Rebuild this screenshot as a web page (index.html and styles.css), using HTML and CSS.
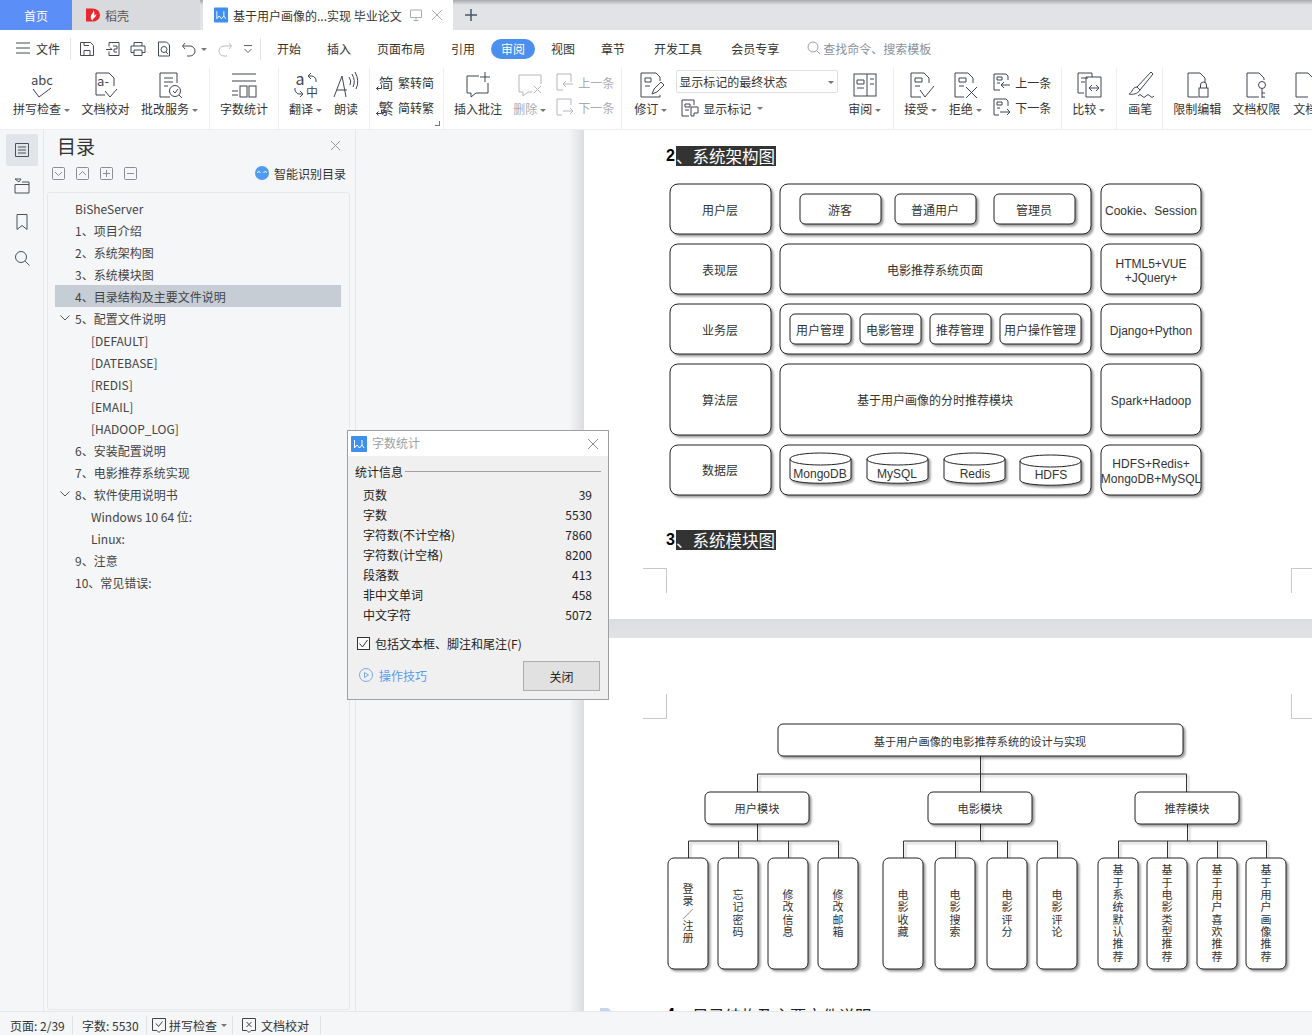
FILE: index.html
```html
<!DOCTYPE html>
<html lang="zh-CN">
<head>
    <meta charset="UTF-8">
    <title>基于用户画像的电影推荐系统的设计与实现 毕业论文</title>
    <link rel="stylesheet" href="styles.css">
</head>
<body>

<!-- Tabs -->
<div class="tabbar">
    <div class="tab tab-home">首页</div>
    <div class="tab tab-app">
        <svg class="tab-logo" viewBox="0 0 16 16"><path class="logo-red" d="M0 1h7a8 7 0 0 1 0 14H0z"/><path class="logo-white" d="M8 2c1 3-3 5-3 8 0 2 1 3 2 4 0-3 4-3 4-7-1 1-2 2-2 2 0-2 0-5-1-7z"/></svg>
        稻壳
    </div>
    <div class="tab tab-doc">
        <svg class="tab-logo" viewBox="0 0 16 16"><rect class="logo-blue" width="15" height="16" rx="1"/><path class="logo-w" d="M3 4v8l2.500-3 2.500 3 2.500-3V4M10.500 9l2 3"/></svg>
        <span class="tab-title">基于用户画像的...实现 毕业论文</span>
        <svg class="tab-ic" viewBox="0 0 12 12"><path d="M.5 1h11v7.500H.5zM6 8.500V11M3.500 11.500h5"/></svg>
        <svg class="tab-ic tab-close" viewBox="0 0 12 12"><path d="M1 1l10 10M11 1L1 11"/></svg>
    </div>
    <svg class="tab-plus" viewBox="0 0 12 12"><path d="M6 0v12M0 6h12"/></svg>
</div>

<!-- Menu row -->
<div class="menubar">
    <div class="file-menu">
        <svg class="qa" viewBox="0 0 16 16"><path d="M1 3h14M1 8h14M1 13h14"/></svg>
        文件
    </div>
    <div class="quick">
        <svg class="qa" viewBox="0 0 16 16"><path d="M1.500 1.500h10l3 3v10h-13zM5 14.500V9.500h6v5M5 1.500v3h5"/></svg>
        <svg class="qa" viewBox="0 0 16 16"><path d="M4 1.500h10v13H4v-4M4 5.500V1.500M1 8.500h6M7 8.500l-2-2M8 5h4v3H9v3h3"/></svg>
        <svg class="qa" viewBox="0 0 16 16"><path d="M4 5V1.500h8V5M4 11.500H1V5h14v6.500h-3M4 9h8v5.500H4z"/></svg>
        <svg class="qa" viewBox="0 0 16 16"><path d="M2.500 1h8l3 3v11h-11z"/><circle cx="8" cy="8.500" r="3"/><path d="M10 11l2 2"/></svg>
        <svg class="qa" viewBox="0 0 16 16"><path d="M4 2L1.500 5 4 8M2 5h7a4.500 4.500 0 0 1 0 10H6"/></svg>
        <i class="caret"></i>
        <svg class="qa qa-off" viewBox="0 0 16 16"><path d="M12 2l2.500 3L12 8M14 5H7a4.500 4.500 0 0 0 0 10h3"/></svg>
        <svg class="qa qa-more" viewBox="0 0 10 10"><path d="M1 1.500h8M1.500 5L5 8.500 8.500 5"/></svg>
    </div>
    <nav class="menu-tabs">
        <span>开始</span>
        <span>插入</span>
        <span>页面布局</span>
        <span>引用</span>
        <span class="on">审阅</span>
        <span>视图</span>
        <span>章节</span>
        <span class="wide">开发工具</span>
        <span class="wide">会员专享</span>
    </nav>
    <div class="search">
        <svg viewBox="0 0 14 14"><circle cx="6" cy="6" r="5"/><path d="M9.500 9.500L13 13"/></svg>
        查找命令、搜索模板
    </div>
</div>

<!-- Ribbon -->
<div class="ribbon">
    <div class="rib-group g-proof">
        <div class="rib-item">
            <svg class="ico" viewBox="0 0 28 28"><text class="ico-text" x="14" y="14">abc</text><path d="M5 18l6 8L23 17"/></svg>
            <span>拼写检查<i class="caret"></i></span>
        </div>
        <div class="rib-item">
            <svg class="ico" viewBox="0 0 28 28"><path d="M22 15V7l-5-5H4v22h9"/><text class="ico-text" x="11" y="15">a-</text><path d="M13 20l5 6 7-8"/></svg>
            <span>文档校对</span>
        </div>
        <div class="rib-item">
            <svg class="ico" viewBox="0 0 28 28"><path d="M21 12V2H4v24h10M8 7h9M8 11h9M8 15h4"/><circle cx="19" cy="20" r="5.500"/><path d="M17 20l2 2 3-4M23 24l3 3"/></svg>
            <span>批改服务<i class="caret"></i></span>
        </div>
    </div>
    <div class="rib-group g-count">
        <div class="rib-item">
            <svg class="ico" viewBox="0 0 28 28"><path d="M2 3h24M2 10h24M2 20h6M2 24h6"/><rect x="10" y="15" width="7" height="11"/><rect x="19" y="15" width="7" height="11"/></svg>
            <span>字数统计</span>
        </div>
    </div>
    <div class="rib-group g-translate">
        <div class="rib-item">
            <svg class="ico" viewBox="0 0 28 28"><text class="ico-text big" x="8" y="14">a</text><text class="ico-text mid" x="20" y="26">中</text><path d="M16 5h4a5 5 0 0 1 4 6M16 5l3-3M16 5l3 3M11 23H7a5 5 0 0 1-4-6M11 23l-3-3M11 23l-3 3"/></svg>
            <span>翻译<i class="caret"></i></span>
        </div>
        <div class="rib-item narrow">
            <svg class="ico" viewBox="0 0 28 28"><path d="M2 26L10 5l4 21M5 19h10M17 6q3 4 1 8M20 3q4 7 1 13M23 1q5 9 1 17"/></svg>
            <span>朗读</span>
        </div>
    </div>
    <div class="rib-group g-convert">
        <div class="rib-stack">
            <div class="rib-row"><span class="glyph">简<svg class="glyph-arrow" viewBox="0 0 6 8"><path d="M5.500 .5v4h-5M.5 4.500l2-2M.5 4.500l2 2"/></svg></span>繁转简</div>
            <div class="rib-row"><span class="glyph">繁<svg class="glyph-arrow" viewBox="0 0 6 8"><path d="M5.500 .5v4h-5M.5 4.500l2-2M.5 4.500l2 2"/></svg></span>简转繁</div>
        </div>
    </div>
    <div class="rib-group g-comment">
        <div class="rib-item">
            <svg class="ico" viewBox="0 0 28 28"><path d="M15 5H3v17h4v4l5-4h12V12M21 1v10M16 6h10"/></svg>
            <span>插入批注</span>
        </div>
        <div class="rib-item off">
            <svg class="ico" viewBox="0 0 28 28"><path d="M25 13V4H3v17h4v4l5-4h4M18 15l7 7M25 15l-7 7"/></svg>
            <span>删除<i class="caret"></i></span>
        </div>
        <div class="rib-stack off">
            <div class="rib-row"><svg class="ico-s" viewBox="0 0 18 18"><path d="M15 9V1H1v16h6M17 11H7M7 11l3-3M7 11l3 3"/></svg>上一条</div>
            <div class="rib-row"><svg class="ico-s" viewBox="0 0 18 18"><path d="M15 7V1H1v16h5M7 13h10M17 13l-3-3M17 13l-3 3"/></svg>下一条</div>
        </div>
    </div>
    <div class="rib-group g-revise">
        <div class="rib-item">
            <svg class="ico" viewBox="0 0 28 28"><path d="M23 10V6l-4-4H4v24h19v-2M8 7h6v4H8zM8 15h5M15 23l2-5 7-7 3 3-7 7z"/></svg>
            <span>修订<i class="caret"></i></span>
        </div>
        <div class="rib-stack wide-stack">
            <div class="select">显示标记的最终状态<i class="caret"></i></div>
            <div class="rib-row mark-row"><svg class="ico-s" viewBox="0 0 18 18"><path d="M13 6V1H1v16h7M4 5h5v3H4zM4 11h4M10 8h7v6h-4v3h-3z"/></svg>显示标记<i class="caret"></i></div>
        </div>
        <div class="rib-item">
            <svg class="ico" viewBox="0 0 28 28"><rect x="3" y="3" width="22" height="22"/><path d="M16 3v22M6 9h7v4H6zM6 17h7M19 8h4M19 13h4"/></svg>
            <span>审阅<i class="caret"></i></span>
        </div>
    </div>
    <div class="rib-group g-accept">
        <div class="rib-item">
            <svg class="ico" viewBox="0 0 28 28"><path d="M22 12V7l-5-5H4v24h10M8 7h7v4H8zM8 15h5M13 19l5 7 9-11"/></svg>
            <span>接受<i class="caret"></i></span>
        </div>
        <div class="rib-item">
            <svg class="ico" viewBox="0 0 28 28"><path d="M22 12V7l-5-5H4v24h9M8 7h7v4H8zM8 15h5M15 16l11 11M26 16L15 27"/></svg>
            <span>拒绝<i class="caret"></i></span>
        </div>
        <div class="rib-stack">
            <div class="rib-row"><svg class="ico-s" viewBox="0 0 18 18"><path d="M15 7V3l-2-2H1v16h6M4 4h5v3H4zM4 10h3M17 12H8M8 12l3-3M8 12l3 3"/></svg>上一条</div>
            <div class="rib-row"><svg class="ico-s" viewBox="0 0 18 18"><path d="M15 8V3l-2-2H1v16h5M4 4h5v3H4zM4 10h3M7 14h10M17 14l-3-3M17 14l-3 3"/></svg>下一条</div>
        </div>
    </div>
    <div class="rib-group g-compare">
        <div class="rib-item">
            <svg class="ico" viewBox="0 0 28 28"><path d="M17 6V2H3v20h6M6 7h7M6 11h4M11 6h15v20H11zM14 17h10M14 17l3-3M14 17l3 3M24 17l-3-3M24 17l-3 3"/></svg>
            <span>比较<i class="caret"></i></span>
        </div>
    </div>
    <div class="rib-group g-pen">
        <div class="rib-item narrow">
            <svg class="ico" viewBox="0 0 28 28"><path d="M25 1L11 16l3 3L27 3zM11 16c-3 0-4 2-5 4s-3 3-3 3c3 1 9 0 11-4M12 25q2-3 4 0t4 0 4 0 4 0"/></svg>
            <span>画笔</span>
        </div>
    </div>
    <div class="rib-group g-protect">
        <div class="rib-item">
            <svg class="ico" viewBox="0 0 28 28"><path d="M22 12V7l-5-5H5v24h10"/><rect x="16" y="17" width="9" height="9"/><path d="M17.500 17v-3a3 3 0 0 1 6 0v3"/></svg>
            <span>限制编辑</span>
        </div>
        <div class="rib-item">
            <svg class="ico" viewBox="0 0 28 28"><path d="M22 9V7l-5-5H5v24h12"/><circle cx="20" cy="14" r="3.500"/><path d="M20 17.500V27M20 22h3M20 26h3"/></svg>
            <span>文档权限</span>
        </div>
        <div class="rib-item">
            <svg class="ico" viewBox="0 0 28 28"><path d="M22 9V7l-5-5H5v24h12"/></svg>
            <span>文档</span>
        </div>
    </div>
</div>

<div class="main">
    <!-- Left rail -->
    <div class="rail">
        <div class="rail-btn active"><svg viewBox="0 0 16 16"><path d="M1.500 1.500h13v13h-13zM4 5h8M4 8h8M4 11h8"/></svg></div>
        <div class="rail-btn"><svg viewBox="0 0 16 16"><path d="M1 1l4 3 2-3zM1 6.500h14v8.500H1zM8 4h7v2.500"/></svg></div>
        <div class="rail-btn"><svg viewBox="0 0 16 16"><path d="M3 .5h10v15l-5-4-5 4z"/></svg></div>
        <div class="rail-btn"><svg viewBox="0 0 16 16"><circle cx="7" cy="7" r="5.500"/><path d="M11 11l4.500 4.500"/></svg></div>
    </div>

    <!-- Table of contents -->
    <div class="toc">
        <div class="toc-head">
            <span class="toc-title">目录</span>
            <svg class="toc-close" viewBox="0 0 10 10"><path d="M0 0l10 10M10 0L0 10"/></svg>
        </div>
        <div class="toc-tools">
            <svg class="tool" viewBox="0 0 13 13"><rect x=".5" y=".5" width="12" height="12" rx="1"/><path d="M3 5l3.500 3.500L10 5"/></svg>
            <svg class="tool" viewBox="0 0 13 13"><rect x=".5" y=".5" width="12" height="12" rx="1"/><path d="M3 8l3.500-3.500L10 8"/></svg>
            <svg class="tool" viewBox="0 0 13 13"><rect x=".5" y=".5" width="12" height="12" rx="1"/><path d="M3 6.500h7M6.500 3v7"/></svg>
            <svg class="tool" viewBox="0 0 13 13"><rect x=".5" y=".5" width="12" height="12" rx="1"/><path d="M3 6.500h7"/></svg>
            <div class="smart">
                <svg viewBox="0 0 14 14"><circle class="smart-bg" cx="7" cy="7" r="7"/><path class="smart-eye" d="M2 6.500q2-2 3.500 0M8.500 6.500q2-2 3.500 0"/></svg>
                智能识别目录
            </div>
        </div>
        <div class="toc-list">
            <div class="toc-item"><i class="slot"></i>BiSheServer</div>
            <div class="toc-item"><i class="slot"></i>1、项目介绍</div>
            <div class="toc-item"><i class="slot"></i>2、系统架构图</div>
            <div class="toc-item"><i class="slot"></i>3、系统模块图</div>
            <div class="toc-item current"><i class="slot"></i>4、目录结构及主要文件说明</div>
            <div class="toc-item"><i class="slot"><svg viewBox="0 0 10 6"><path d="M.5.5L5 5 9.500.5"/></svg></i>5、配置文件说明</div>
            <div class="toc-item sub"><i class="slot"></i>[DEFAULT]</div>
            <div class="toc-item sub"><i class="slot"></i>[DATEBASE]</div>
            <div class="toc-item sub"><i class="slot"></i>[REDIS]</div>
            <div class="toc-item sub"><i class="slot"></i>[EMAIL]</div>
            <div class="toc-item sub"><i class="slot"></i>[HADOOP_LOG]</div>
            <div class="toc-item"><i class="slot"></i>6、安装配置说明</div>
            <div class="toc-item"><i class="slot"></i>7、电影推荐系统实现</div>
            <div class="toc-item"><i class="slot"><svg viewBox="0 0 10 6"><path d="M.5.5L5 5 9.500.5"/></svg></i>8、软件使用说明书</div>
            <div class="toc-item sub"><i class="slot"></i>Windows 10 64 位:</div>
            <div class="toc-item sub"><i class="slot"></i>Linux:</div>
            <div class="toc-item"><i class="slot"></i>9、注意</div>
            <div class="toc-item"><i class="slot"></i>10、常见错误:</div>
        </div>
    </div>

    <div class="gutter"></div>

    <!-- Document -->
    <div class="doc">
        <div class="page page-one">
            <h2 class="doc-h"><b>2</b><span class="sel">、系统架构图</span></h2>
            <svg class="dg dg-arch" viewBox="660 178 552 325">
                <rect class="b" x="670" y="184" width="101" height="50" rx="8"/><text x="720" y="210">用户层</text>
                <rect class="b" x="780" y="184" width="311" height="50" rx="8"/>
                <rect class="b" x="800" y="194" width="81" height="30" rx="5"/><text x="840" y="210">游客</text>
                <rect class="b" x="895" y="194" width="81" height="30" rx="5"/><text x="935" y="210">普通用户</text>
                <rect class="b" x="994" y="194" width="81" height="30" rx="5"/><text x="1034" y="210">管理员</text>
                <rect class="b" x="1101" y="184" width="100" height="50" rx="8"/><text x="1151" y="210">Cookie、Session</text>

                <rect class="b" x="670" y="244" width="101" height="50" rx="8"/><text x="720" y="270">表现层</text>
                <rect class="b" x="780" y="244" width="311" height="50" rx="8"/><text x="935" y="270">电影推荐系统页面</text>
                <rect class="b" x="1101" y="244" width="100" height="50" rx="8"/><text x="1151" y="263">HTML5+VUE</text><text x="1151" y="277">+JQuery+</text>

                <rect class="b" x="670" y="304" width="101" height="50" rx="8"/><text x="720" y="330">业务层</text>
                <rect class="b" x="780" y="304" width="311" height="50" rx="8"/>
                <rect class="b" x="790" y="314" width="61" height="30" rx="5"/><text x="820" y="330">用户管理</text>
                <rect class="b" x="860" y="314" width="61" height="30" rx="5"/><text x="890" y="330">电影管理</text>
                <rect class="b" x="930" y="314" width="61" height="30" rx="5"/><text x="960" y="330">推荐管理</text>
                <rect class="b" x="1000" y="314" width="81" height="30" rx="5"/><text x="1040" y="330">用户操作管理</text>
                <rect class="b" x="1101" y="304" width="100" height="50" rx="8"/><text x="1151" y="330">Django+Python</text>

                <rect class="b" x="670" y="364" width="101" height="71" rx="8"/><text x="720" y="400">算法层</text>
                <rect class="b" x="780" y="364" width="311" height="71" rx="8"/><text x="935" y="400">基于用户画像的分时推荐模块</text>
                <rect class="b" x="1101" y="364" width="100" height="71" rx="8"/><text x="1151" y="400">Spark+Hadoop</text>

                <rect class="b" x="670" y="445" width="101" height="50" rx="8"/><text x="720" y="470">数据层</text>
                <rect class="b" x="780" y="445" width="311" height="50" rx="8"/>
                <g class="cyl"><path d="M790 459v19c0 7 61 7 61 0v-19c0-8-61-8-61 0c0 8 61 8 61 0"/></g><text x="820" y="473">MongoDB</text>
                <g class="cyl"><path d="M867 459v19c0 7 61 7 61 0v-19c0-8-61-8-61 0c0 8 61 8 61 0"/></g><text x="897" y="473">MySQL</text>
                <g class="cyl"><path d="M944 459v19c0 7 61 7 61 0v-19c0-8-61-8-61 0c0 8 61 8 61 0"/></g><text x="975" y="473">Redis</text>
                <g class="cyl"><path d="M1020 461v19c0 7 61 7 61 0v-19c0-8-61-8-61 0c0 8 61 8 61 0"/></g><text x="1051" y="474">HDFS</text>
                <rect class="b" x="1101" y="445" width="100" height="50" rx="8"/><text x="1151" y="463">HDFS+Redis+</text><text x="1151" y="478">MongoDB+MySQL</text>
            </svg>
            <h2 class="doc-h second"><b>3</b><span class="sel">、系统模块图</span></h2>
            <i class="mark mark-tl"></i>
            <i class="mark mark-tr"></i>
        </div>

        <div class="page-gap"></div>

        <div class="page page-two">
            <i class="mark mark-bl"></i>
            <i class="mark mark-br"></i>
            <svg class="dg dg-tree" viewBox="660 720 640 260">
                <path class="link" d="M980.500 756v36M757.500 792v-18h429v18M757.500 824v17M688.500 858v-17h150v17M738.500 841v17M788.500 841v17M980.500 824v17M903.500 858v-17h154v17M955.500 841v17M1007.500 841v17M1187.500 824v17M1118.500 858v-17h148v17M1167.500 841v17M1217.500 841v17"/>

                <rect class="b" x="778" y="724" width="405" height="32" rx="5"/><text class="sm" x="980" y="741">基于用户画像的电影推荐系统的设计与实现</text>
                <rect class="b" x="705" y="792" width="104" height="32" rx="5"/><text class="sm" x="757" y="808">用户模块</text>
                <rect class="b" x="928" y="792" width="104" height="32" rx="5"/><text class="sm" x="980" y="808">电影模块</text>
                <rect class="b" x="1135" y="792" width="104" height="32" rx="5"/><text class="sm" x="1187" y="808">推荐模块</text>

                <rect class="b" x="668" y="858" width="40" height="111" rx="6"/><text class="vt" x="688" y="914">登录／注册</text>
                <rect class="b" x="718" y="858" width="40" height="111" rx="6"/><text class="vt" x="738" y="914">忘记密码</text>
                <rect class="b" x="768" y="858" width="40" height="111" rx="6"/><text class="vt" x="788" y="914">修改信息</text>
                <rect class="b" x="818" y="858" width="40" height="111" rx="6"/><text class="vt" x="838" y="914">修改邮箱</text>

                <rect class="b" x="883" y="858" width="40" height="111" rx="6"/><text class="vt" x="903" y="914">电影收藏</text>
                <rect class="b" x="935" y="858" width="40" height="111" rx="6"/><text class="vt" x="955" y="914">电影搜索</text>
                <rect class="b" x="987" y="858" width="40" height="111" rx="6"/><text class="vt" x="1007" y="914">电影评分</text>
                <rect class="b" x="1037" y="858" width="40" height="111" rx="6"/><text class="vt" x="1057" y="914">电影评论</text>

                <rect class="b" x="1098" y="858" width="40" height="111" rx="6"/><text class="vt" x="1118" y="914">基于系统默认推荐</text>
                <rect class="b" x="1147" y="858" width="40" height="111" rx="6"/><text class="vt" x="1167" y="914">基于电影类型推荐</text>
                <rect class="b" x="1197" y="858" width="40" height="111" rx="6"/><text class="vt" x="1217" y="914">基于用户喜欢推荐</text>
                <rect class="b" x="1246" y="858" width="40" height="111" rx="6"/><text class="vt" x="1266" y="914">基于用户画像推荐</text>
            </svg>
            <div class="doc-next">
                <svg class="next-ic" viewBox="0 0 12 14"><path d="M0 0h8l4 4v10H0z"/></svg>
                <b>4</b><span>、目录结构及主要文件说明</span>
            </div>
        </div>
    </div>
</div>

<!-- Status bar -->
<div class="statusbar">
    <div class="st-cell st-page">页面: 2/39</div>
    <div class="st-cell st-words">字数: 5530</div>
    <div class="st-cell st-spell">
        <svg class="st-ic" viewBox="0 0 14 16"><path d="M.5 1.500h13v12H9L7 15.500 5 13.500H.5zM4 6.500l2.500 3 4-5"/></svg>
        拼写检查<i class="caret"></i>
    </div>
    <div class="st-cell st-proof">
        <svg class="st-ic" viewBox="0 0 14 16"><path d="M.5 1.500h13v12H9L7 15.500 5 13.500H.5zM4.500 5l5 5M9.500 5l-5 5"/></svg>
        文档校对
    </div>
</div>

<!-- Word count dialog -->
<div class="dialog">
    <div class="dlg-title">
        <svg class="dlg-logo" viewBox="0 0 16 16"><rect class="logo-blue" width="16" height="16" rx="1"/><path class="logo-w" d="M3.500 4v8l2.500-3 2.500 3 2.500-3V4M11 9l2 3"/></svg>
        <span>字数统计</span>
        <svg class="dlg-close" viewBox="0 0 10 10"><path d="M0 0l10 10M10 0L0 10"/></svg>
    </div>
    <div class="dlg-body">
        <div class="legend"><span>统计信息</span></div>
        <div class="stat"><span>页数</span><span>39</span></div>
        <div class="stat"><span>字数</span><span>5530</span></div>
        <div class="stat"><span>字符数(不计空格)</span><span>7860</span></div>
        <div class="stat"><span>字符数(计空格)</span><span>8200</span></div>
        <div class="stat"><span>段落数</span><span>413</span></div>
        <div class="stat"><span>非中文单词</span><span>458</span></div>
        <div class="stat"><span>中文字符</span><span>5072</span></div>
        <label class="check">
            <svg viewBox="0 0 13 13"><rect x=".5" y=".5" width="12" height="12"/><path d="M2.500 6.500l3 3.500 5-7"/></svg>
            包括文本框、脚注和尾注(F)
        </label>
        <div class="dlg-foot">
            <span class="tips">
                <svg viewBox="0 0 14 14"><circle cx="7" cy="7" r="6.500"/><path d="M5.500 4.500v5L9.500 7z"/></svg>
                操作技巧
            </span>
            <button class="dlg-btn">关闭</button>
        </div>
    </div>
</div>

</body>
</html>
```

FILE: styles.css
```css
html, body {
    margin: 0;
    padding: 0;
}
body {
    width: 1312px;
    height: 1035px;
    overflow: hidden;
    display: flex;
    flex-direction: column;
    position: relative;
    background-color: #f5f6f8;
    color: #333;
    font-family: "Noto Sans CJK SC", "Noto Sans", sans-serif;
    font-size: 12px;
}
svg {
    display: block;
    flex: none;
}
.caret {
    display: inline-block;
    width: 0;
    height: 0;
    margin-left: 3px;
    vertical-align: middle;
    border: 3px solid transparent;
    border-top: 3px solid #777;
    border-bottom: 0;
}

/* Tabs */
.tabbar {
    flex: none;
    height: 30px;
    display: flex;
    align-items: stretch;
    background: linear-gradient(#a8a9ac 0, #e2e3e7 5px);
}
.tab {
    display: flex;
    align-items: center;
}
.tab-home {
    width: 72px;
    justify-content: center;
    background-color: #5b8ef7;
    color: white;
}
.tab-app {
    width: 128px;
    padding-left: 14px;
    box-sizing: border-box;
    background-color: #d9dade;
    color: #555;
}
.tab-logo {
    width: 15px;
    height: 16px;
    margin-right: 4px;
}
.logo-red { fill: #e8262d; }
.logo-white { fill: white; }
.logo-blue { fill: #3f8ff0; }
.logo-w {
    fill: none;
    stroke: white;
}
.tab-doc {
    width: 250px;
    margin-left: 3px;
    padding-left: 11px;
    box-sizing: border-box;
    background-color: white;
}
.tab-title {
    width: 177px;
    white-space: nowrap;
}
.tab-ic {
    width: 12px;
    height: 12px;
    fill: none;
    stroke: #a9acb3;
}
.tab-close {
    margin-left: 9px;
}
.tab-plus {
    width: 12px;
    height: 12px;
    margin: 9px 0 0 12px;
    fill: none;
    stroke: #4a5568;
    stroke-width: 1.500;
}

/* Menu row */
.menubar {
    flex: none;
    height: 38px;
    display: flex;
    align-items: center;
    background-color: white;
}
.file-menu {
    width: 71px;
    height: 22px;
    display: flex;
    align-items: center;
    gap: 5px;
    padding: 0 0 2px 15px;
    box-sizing: border-box;
    border-right: 1px solid #e3e4e7;
}
.qa {
    width: 16px;
    height: 16px;
    fill: none;
    stroke: #444a55;
}
.quick {
    width: 190px;
    height: 22px;
    display: flex;
    align-items: center;
    gap: 9.500px;
    padding-left: 8px;
    box-sizing: border-box;
    border-right: 1px solid #e3e4e7;
}
.quick .caret {
    margin: 0 4px 0 -6px;
}
.qa-off {
    stroke: #b9bcc2;
    margin-left: -3px;
}
.qa-more {
    width: 10px;
    height: 10px;
    fill: none;
    stroke: #666;
}
.menu-tabs {
    display: flex;
    gap: 6px;
    margin-left: 6px;
}
.menu-tabs span {
    height: 20px;
    line-height: 20px;
    padding: 0 10px;
    border-radius: 10px;
}
.menu-tabs .on {
    background-color: #4b90ee;
    color: white;
}
.menu-tabs .wide {
    margin-left: 3px;
}
.search {
    display: flex;
    align-items: center;
    gap: 2px;
    margin-left: 18px;
    padding-bottom: 2px;
    color: #8b909b;
}
.search svg {
    width: 14px;
    height: 14px;
    fill: none;
    stroke: #9aa0aa;
}

/* Ribbon */
.ribbon {
    flex: none;
    height: 62px;
    display: flex;
    background-color: white;
    border-bottom: 1px solid #eceef1;
    box-sizing: border-box;
    overflow: hidden;
}
.rib-group {
    flex: none;
    position: relative;
    display: flex;
    gap: 11px;
    padding-top: 2px;
    border-right: 1px solid #eceef0;
}
.g-proof { padding-left: 13px; padding-right: 11px; gap: 11.500px; }
.g-count { padding-left: 10px; padding-right: 10px; }
.g-translate { padding-left: 10px; padding-right: 11px; gap: 12px; }
.g-convert { padding-left: 8px; padding-right: 9px; }
.g-comment { padding-left: 10px; padding-right: 7px; }
.g-comment .rib-stack { margin-left: -1px; }
.g-revise { padding-left: 12px; padding-right: 12px; }
.g-accept { padding-left: 10px; padding-right: 10px; gap: 11.500px; }
.g-compare { padding-left: 10px; padding-right: 11px; }
.g-pen { padding-left: 11px; padding-right: 10px; }
.g-protect { padding-left: 10px; border-right: 0; }
.g-convert::after {
    content: "";
    position: absolute;
    right: 3px;
    bottom: 3px;
    width: 4px;
    height: 4px;
    border-right: 1px solid #777;
    border-bottom: 1px solid #777;
}
.rib-item {
    display: flex;
    flex-direction: column;
    align-items: center;
    padding-top: 1px;
    white-space: nowrap;
}
.rib-item span {
    display: block;
    height: 16px;
    line-height: 16px;
    margin-top: 2px;
}
.rib-item.off, .rib-stack.off {
    color: #a9acb3;
}
.ico {
    width: 28px;
    height: 28px;
    fill: none;
    stroke: #3f4650;
}
.narrow .ico {
    margin: 0 -2px;
}
.off .ico, .off .ico-s {
    stroke: #b4b7bd;
}
.ico-text {
    fill: #3f4650;
    stroke: none;
    font-size: 13px;
    text-anchor: middle;
}
.ico-text.big {
    font-size: 16px;
}
.ico-text.mid {
    font-size: 12px;
}
.rib-stack {
    display: flex;
    flex-direction: column;
    gap: 1px;
    white-space: nowrap;
}
.rib-row {
    height: 24px;
    display: flex;
    align-items: center;
    gap: 4px;
}
.ico-s {
    width: 18px;
    height: 18px;
    fill: none;
    stroke: #3f4650;
}
.glyph {
    position: relative;
    width: 16px;
    font-size: 15px;
    text-align: center;
    color: #3f4650;
}
.glyph-arrow {
    position: absolute;
    left: -2px;
    bottom: 1px;
    width: 6px;
    height: 8px;
    fill: none;
    stroke: #3f4650;
    background-color: white;
}
.wide-stack {
    width: 162px;
    margin: 0 -1px 0 -2px;
}
.select {
    height: 23px;
    line-height: 21px;
    padding-left: 2px;
    position: relative;
    box-sizing: border-box;
    border: 1px solid #dfe0e3;
    border-radius: 2px;
}
.select .caret {
    position: absolute;
    right: 3px;
    top: 10px;
}
.mark-row {
    padding-left: 5px;
    margin-top: 2px;
}
.mark-row .caret {
    margin-left: 2px;
}

/* Main area */
.main {
    flex: 1;
    min-height: 0;
    display: flex;
}
.rail {
    flex: none;
    width: 43px;
    padding-top: 4px;
    box-sizing: content-box;
    border-right: 1px solid #e6e7ea;
}
.rail-btn {
    width: 32px;
    height: 32px;
    margin: 0 0 4px 6px;
    display: flex;
    align-items: center;
    justify-content: center;
    border-radius: 2px;
}
.rail-btn.active {
    background-color: #e1e4e9;
}
.rail-btn svg {
    width: 16px;
    height: 16px;
    fill: none;
    stroke: #49515c;
}
.toc {
    flex: none;
    width: 311px;
    display: flex;
    flex-direction: column;
    border-right: 1px solid #e6e7ea;
}
.toc-head {
    height: 30px;
    display: flex;
    align-items: center;
    justify-content: space-between;
    padding: 0 15px 0 13px;
}
.toc-title {
    font-size: 19px;
    color: #333;
}
.toc-close {
    width: 9px;
    height: 9px;
    fill: none;
    stroke: #8a8d93;
}
.toc-tools {
    height: 26px;
    display: flex;
    align-items: center;
    gap: 11px;
    padding: 0 9px 0 8px;
    margin-bottom: 6px;
}
.tool {
    width: 13px;
    height: 13px;
    fill: none;
    stroke: #8a8d93;
}
.smart {
    margin-left: auto;
    display: flex;
    align-items: center;
    gap: 5px;
}
.smart svg {
    width: 14px;
    height: 14px;
}
.smart-bg { fill: #4f9bf2; }
.smart-eye {
    fill: none;
    stroke: white;
}
.toc-list {
    flex: 1;
    margin: 0 5px 1px 3px;
    padding: 4px 8px 0 7px;
    background-color: #f5f6f8;
    border: 1px solid #e6e8eb;
    border-radius: 3px;
    color: #444;
}
.toc-item {
    height: 22px;
    display: flex;
    align-items: center;
    white-space: nowrap;
}
.toc-item.current {
    background-color: #c6cdd4;
}
.toc-item.sub {
    padding-left: 16px;
}
.slot {
    flex: none;
    width: 20px;
    display: flex;
    justify-content: center;
}
.slot svg {
    width: 10px;
    height: 6px;
    fill: none;
    stroke: #555;
}
.gutter {
    flex: none;
    width: 228px;
    background: linear-gradient(to right, #f5f6f8 213px, #dcdde0);
}

/* Document */
.doc {
    flex: 1;
    min-width: 0;
    overflow: hidden;
    display: flex;
    flex-direction: column;
}
.page {
    position: relative;
    flex: none;
    background-color: white;
}
.page-one {
    height: 489px;
    padding-top: 16px;
    box-sizing: border-box;
}
.page-gap {
    flex: none;
    height: 19px;
    background: linear-gradient(#dcdde0, #e2e3e5);
}
.page-two {
    flex: 1;
    min-height: 0;
    overflow: hidden;
}
.doc-h {
    margin: 0 0 0 82px;
    height: 20px;
    display: flex;
    align-items: center;
    font-size: 16.500px;
    font-weight: normal;
    line-height: 20px;
}
.doc-h b, .doc-next b {
    width: 10px;
    font-family: "Liberation Sans", sans-serif;
    font-size: 16px;
    color: black;
}
.sel {
    width: 100px;
    height: 20px;
    background-color: #333;
    color: white;
    white-space: nowrap;
}
.doc-h.second {
    margin-top: 27px;
}
.dg {
    margin: 12px 0 0 76px;
    overflow: visible;
}
.dg-arch {
    width: 552px;
    height: 325px;
}
.dg-tree {
    width: 640px;
    height: 260px;
    margin-top: 82px;
}
.dg text {
    font-family: "Liberation Sans", "Noto Sans CJK SC", sans-serif;
    font-size: 12px;
    fill: #333;
    text-anchor: middle;
    dominant-baseline: central;
    transform: translateY(1px);
}
.dg .sm {
    font-size: 11.200px;
}
.dg .vt {
    font-family: "Noto Sans CJK SC", sans-serif;
    font-size: 11px;
    letter-spacing: 1.300px;
    writing-mode: vertical-rl;
    transform: none;
}
.b, .cyl path {
    fill: white;
    stroke: #222;
    filter: drop-shadow(2px 2px 1px rgba(0, 0, 0, 0.4));
}
.link {
    fill: none;
    stroke: #333;
    filter: drop-shadow(2px 2px 1px rgba(0, 0, 0, 0.3));
}
.mark {
    position: absolute;
    width: 23px;
    height: 24px;
    border: 0 solid #c9c9c9;
}
.mark-tl {
    left: 59px;
    top: 438px;
    border-top-width: 1px;
    border-right-width: 1px;
}
.mark-tr {
    left: 707px;
    top: 438px;
    border-top-width: 1px;
    border-left-width: 1px;
}
.mark-bl {
    left: 59px;
    top: 56px;
    border-bottom-width: 1px;
    border-right-width: 1px;
}
.mark-br {
    left: 707px;
    top: 56px;
    border-bottom-width: 1px;
    border-left-width: 1px;
}
.doc-next {
    display: flex;
    align-items: center;
    height: 20px;
    margin-top: 25px;
    padding-left: 16px;
    font-size: 16.300px;
    color: #222;
}
.next-ic {
    width: 12px;
    height: 14px;
    margin-right: 54px;
    fill: #c5d4ef;
}

/* Status bar */
.statusbar {
    flex: none;
    height: 24px;
    display: flex;
    align-items: center;
    padding-top: 3px;
    background-color: #f5f6f8;
    border-top: 1px solid #e6e7ea;
    box-sizing: border-box;
}
.st-cell {
    height: 18px;
    display: flex;
    align-items: center;
    gap: 3px;
    box-sizing: border-box;
    white-space: nowrap;
    border-right: 1px solid #e0e1e4;
}
.st-page { width: 73px; padding-left: 10px; }
.st-words { width: 74px; padding-left: 9px; }
.st-spell { width: 86px; padding-left: 5px; }
.st-proof { width: 88px; padding-left: 9px; gap: 5px; }
.st-cell .caret {
    margin-left: 1px;
}
.st-ic {
    width: 14px;
    height: 16px;
    fill: none;
    stroke: #444;
}

/* Word count dialog */
.dialog {
    position: absolute;
    left: 347px;
    top: 430px;
    width: 262px;
    height: 270px;
    box-sizing: border-box;
    display: flex;
    flex-direction: column;
    background-color: #f0f0f0;
    border: 1px solid #a0a0a0;
    color: #222;
}
.dlg-title {
    flex: none;
    height: 25px;
    display: flex;
    align-items: center;
    padding: 0 10px 0 3px;
    background-color: white;
    color: #a0a0a0;
}
.dlg-title span {
    margin-bottom: 2px;
}
.dlg-logo {
    width: 16px;
    height: 16px;
    margin-right: 5px;
}
.dlg-close {
    width: 10px;
    height: 10px;
    margin-left: auto;
    fill: none;
    stroke: #8a8a8a;
}
.dlg-body {
    flex: 1;
    padding: 7px 7px 0 7px;
}
.legend {
    display: flex;
    align-items: center;
    height: 16px;
    margin-bottom: 6px;
}
.legend::after {
    content: "";
    flex: 1;
    margin-left: 2px;
    border-top: 1px solid #a0a0a0;
}
.stat {
    display: flex;
    justify-content: space-between;
    height: 20px;
    line-height: 20px;
    padding: 0 9px 0 8px;
}
.check {
    display: flex;
    align-items: center;
    gap: 5px;
    height: 16px;
    margin: 10px 0 0 2px;
}
.check svg {
    width: 13px;
    height: 13px;
    fill: white;
    stroke: #333;
}
.dlg-foot {
    display: flex;
    align-items: center;
    justify-content: space-between;
    margin-top: 10px;
}
.tips {
    display: flex;
    align-items: center;
    gap: 6px;
    padding: 0 0 2px 4px;
    color: #5b9bf0;
}
.tips svg {
    width: 14px;
    height: 14px;
    fill: none;
    stroke: #7aa8e8;
}
.dlg-btn {
    width: 77px;
    height: 30px;
    padding: 0;
    margin-right: 1px;
    background-color: #e1e1e1;
    border: 1px solid #adadad;
    color: #222;
    font-family: inherit;
    font-size: 12px;
}
```
